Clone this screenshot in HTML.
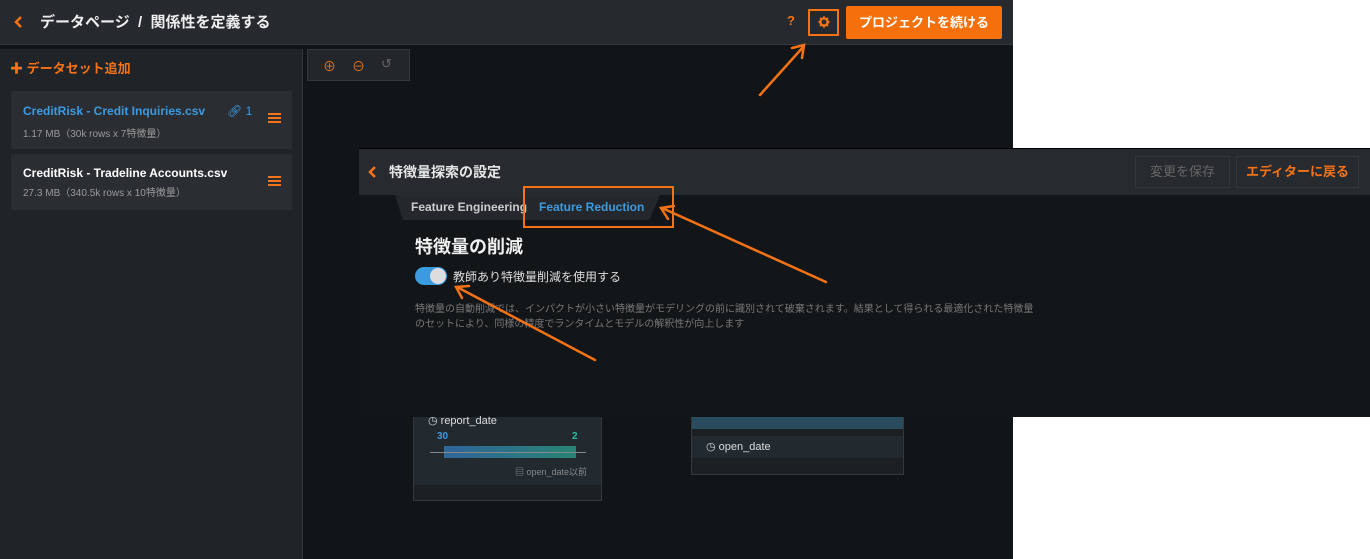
<!DOCTYPE html>
<html><head><meta charset="utf-8"><style>
*{box-sizing:border-box;margin:0;padding:0}
body{width:1370px;height:559px;background:#fff;position:relative;overflow:hidden;font-family:"Liberation Sans","Noto Sans CJK JP",sans-serif;color:#e6e6e6}
.abs{position:absolute}
</style></head><body>
<div class="abs" style="left:0;top:0;width:1013px;height:559px;background:#111517"></div>
<div class="abs" style="left:0;top:0;width:1013px;height:45px;background:#26292d;border-bottom:1px solid #33373b"></div>
<svg class="abs" style="left:13px;top:15px" width="10" height="14"><path d="M8 2 L3 7 L8 12" stroke="#f57316" stroke-width="2.5" fill="none"/></svg>
<div class="abs" style="left:40px;top:11px;font-size:15px;font-weight:bold;color:#eee">データページ&nbsp; /&nbsp; 関係性を定義する</div>
<div class="abs" style="left:787px;top:13px;color:#f57316;font-size:13px;font-weight:bold">?</div>
<div class="abs" style="left:808px;top:9px;width:31px;height:27px;border:2.5px solid #f57316"></div>
<svg class="abs" style="left:818px;top:16px" width="12" height="12" viewBox="0 0 12 12"><circle cx="6" cy="6" r="3.6" fill="none" stroke="#f57316" stroke-width="2.4"/><g stroke="#f57316" stroke-width="2"><path d="M6 0.5V2.5M6 9.5V11.5M0.5 6H2.5M9.5 6H11.5M2.1 2.1L3.5 3.5M8.5 8.5L9.9 9.9M2.1 9.9L3.5 8.5M8.5 3.5L9.9 2.1"/></g></svg>
<div class="abs" style="left:846px;top:6px;width:156px;height:33px;background:#f56f0a;border-radius:2px;color:#fff;font-size:13px;font-weight:bold;text-align:center;line-height:33px">プロジェクトを続ける</div>
<div class="abs" style="left:0;top:49px;width:303px;height:510px;background:#202327;border-right:1px solid #34383c"></div>
<div class="abs" style="left:10px;top:58px;color:#f57316;font-size:13px;font-weight:bold">✚ データセット追加</div>
<div class="abs" style="left:11px;top:91px;width:281px;height:58px;background:#2a2e32;border-radius:2px"></div>
<div class="abs" style="left:23px;top:104px;color:#3b9ae0;font-size:12px;font-weight:bold">CreditRisk - Credit Inquiries.csv</div>
<div class="abs" style="left:227px;top:104px;color:#3b9ae0;font-size:12px">🔗︎ 1</div>
<div class="abs" style="left:23px;top:125px;color:#999;font-size:10px">1.17 MB（30k rows x 7特徴量）</div>
<div class="abs" style="left:11px;top:154px;width:281px;height:56px;background:#2a2e32;border-radius:2px"></div>
<div class="abs" style="left:23px;top:166px;color:#fff;font-size:12px;font-weight:bold">CreditRisk - Tradeline Accounts.csv</div>
<div class="abs" style="left:23px;top:184px;color:#999;font-size:10px">27.3 MB（340.5k rows x 10特徴量）</div>
<div class="abs" style="left:268px;top:113px;width:13px;height:10px;border-top:2px solid #f57316;border-bottom:2px solid #f57316"><div style="margin-top:2px;border-top:2px solid #f57316"></div></div>
<div class="abs" style="left:268px;top:176px;width:13px;height:10px;border-top:2px solid #f57316;border-bottom:2px solid #f57316"><div style="margin-top:2px;border-top:2px solid #f57316"></div></div>
<div class="abs" style="left:307px;top:49px;width:103px;height:32px;background:#23262a;border:1px solid #34383c"></div>
<div class="abs" style="left:323px;top:56px;color:#f57316;font-size:13px">⊕</div>
<div class="abs" style="left:352px;top:56px;color:#f57316;font-size:13px">⊖</div>
<div class="abs" style="left:381px;top:56px;color:#666;font-size:13px">↺</div>
<div class="abs" style="left:1013px;top:0;width:357px;height:148px;background:#fff"></div>
<div class="abs" style="left:359px;top:148px;width:1011px;height:269px;background:#121618"></div>
<div class="abs" style="left:359px;top:148px;width:1011px;height:47px;background:#272a2e;border-top:1px solid #000"></div>
<svg class="abs" style="left:367px;top:165px" width="10" height="14"><path d="M8 2 L3 7 L8 12" stroke="#f57316" stroke-width="2.5" fill="none"/></svg>
<div class="abs" style="left:389px;top:162px;font-size:14px;font-weight:bold">特徴量探索の設定</div>
<div class="abs" style="left:1135px;top:156px;width:95px;height:32px;border:1px solid #34383c;color:#666;font-size:13px;text-align:center;line-height:30px">変更を保存</div>
<div class="abs" style="left:1236px;top:156px;width:123px;height:32px;border:1px solid #34383c;color:#f57316;font-size:13px;font-weight:bold;text-align:center;line-height:30px">エディターに戻る</div>
<div class="abs" style="left:395px;top:195px;width:265px;height:25px;background:#24282c;clip-path:polygon(0 0,100% 0,96% 100%,3% 100%)"></div>
<div class="abs" style="left:411px;top:200px;color:#ccc;font-size:12px;font-weight:bold">Feature Engineering</div>
<div class="abs" style="left:539px;top:200px;color:#3b9ae0;font-size:12px;font-weight:bold">Feature Reduction</div>
<div class="abs" style="left:523px;top:186px;width:151px;height:42px;border:2px solid #f57316"></div>
<div class="abs" style="left:415px;top:233px;font-size:18px;font-weight:bold;color:#f0f0f0">特徴量の削減</div>
<div class="abs" style="left:415px;top:267px;width:32px;height:18px;border-radius:9px;background:#3b9ae0"></div>
<div class="abs" style="left:430px;top:268px;width:16px;height:16px;border-radius:8px;background:#ddd"></div>
<div class="abs" style="left:453px;top:268px;font-size:12px;color:#ddd">教師あり特徴量削減を使用する</div>
<div class="abs" style="left:415px;top:302px;font-size:10px;color:#777;line-height:15px;width:625px">特徴量の自動削減では、インパクトが小さい特徴量がモデリングの前に識別されて破棄されます。結果として得られる最適化された特徴量のセットにより、同様の精度でランタイムとモデルの解釈性が向上します</div>
<div class="abs" style="left:1013px;top:417px;width:357px;height:142px;background:#fff"></div>
<div class="abs" style="left:413px;top:417px;width:189px;height:84px;background:#222a30;border:1px solid #34383c;border-top:none"></div>
<div class="abs" style="left:414px;top:485px;width:187px;height:15px;background:#1d2023"></div>
<div class="abs" style="left:428px;top:414px;font-size:11px;color:#ddd">◷ report_date</div>
<div class="abs" style="left:437px;top:431px;font-size:10px;color:#3b9ae0;font-weight:bold">30</div>
<div class="abs" style="left:572px;top:431px;font-size:10px;color:#2cc1a4;font-weight:bold">2</div>
<div class="abs" style="left:444px;top:446px;width:132px;height:12px;background:linear-gradient(90deg,#3b8be0,#2cc1a4);opacity:.6;border-left:2px solid #3b9ae0;border-right:2px solid #2cc1a4"></div>
<div class="abs" style="left:430px;top:452px;width:156px;height:1px;background:#888"></div>
<div class="abs" style="left:515px;top:465px;font-size:9px;color:#888">▤ open_date以前</div>
<div class="abs" style="left:691px;top:417px;width:213px;height:58px;background:#1d2023;border:1px solid #34383c;border-top:none"></div>
<div class="abs" style="left:692px;top:417px;width:211px;height:12px;background:#2a4a5e"></div>
<div class="abs" style="left:692px;top:436px;width:211px;height:22px;background:#222a30"></div>
<div class="abs" style="left:706px;top:440px;font-size:11px;color:#ddd">◷ open_date</div>
<svg class="abs" style="left:0;top:0" width="1370" height="559">
<g stroke="#f57316" stroke-width="2.5" fill="none" stroke-linecap="round">
<path d="M760 95 L804 46 M792 48 L804 45 L802 58"/>
<path d="M826 282 L662 208 M674 206 L661 208 L668 219"/>
<path d="M595 360 L457 287 M469 286 L456 287 L462 298"/>
</g></svg>
</body></html>
